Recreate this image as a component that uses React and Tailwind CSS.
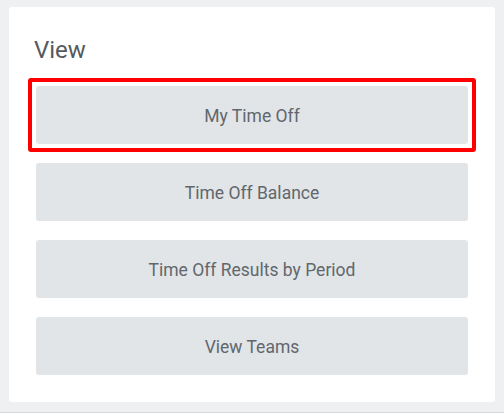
import React from 'react';

const items = ['My Time Off', 'Time Off Balance', 'Time Off Results by Period', 'View Teams'];

export default function App() {
  return (
    <div className="w-[504px] h-[413px] bg-[#eff0f2] pt-[7px] pl-[9px] border-b border-[#d6d8db] font-['Roboto',sans-serif]">
      <div className="w-[486px] h-[395px] bg-white rounded-[3px] px-[27px] pt-[29px]">
        <h2 className="text-[24px] leading-[28px] text-[#555a5e] -ml-[2px]">View</h2>
        <div className="mt-[22px] flex flex-col gap-[19px]">
          {items.map((label, i) => {
            const btn = (
              <button
                key={label}
                className="h-[58px] w-full rounded-[3px] bg-[#e1e5e8] text-[17.5px] pt-[2px] text-[#62676c]"
              >
                {label}
              </button>
            );
            // selected item gets the red highlight frame
            return i === 0 ? (
              <div key={label} className="-m-2 border-4 border-[#ff0000] rounded-[3px] p-1">
                {btn}
              </div>
            ) : (
              btn
            );
          })}
        </div>
      </div>
    </div>
  );
}
